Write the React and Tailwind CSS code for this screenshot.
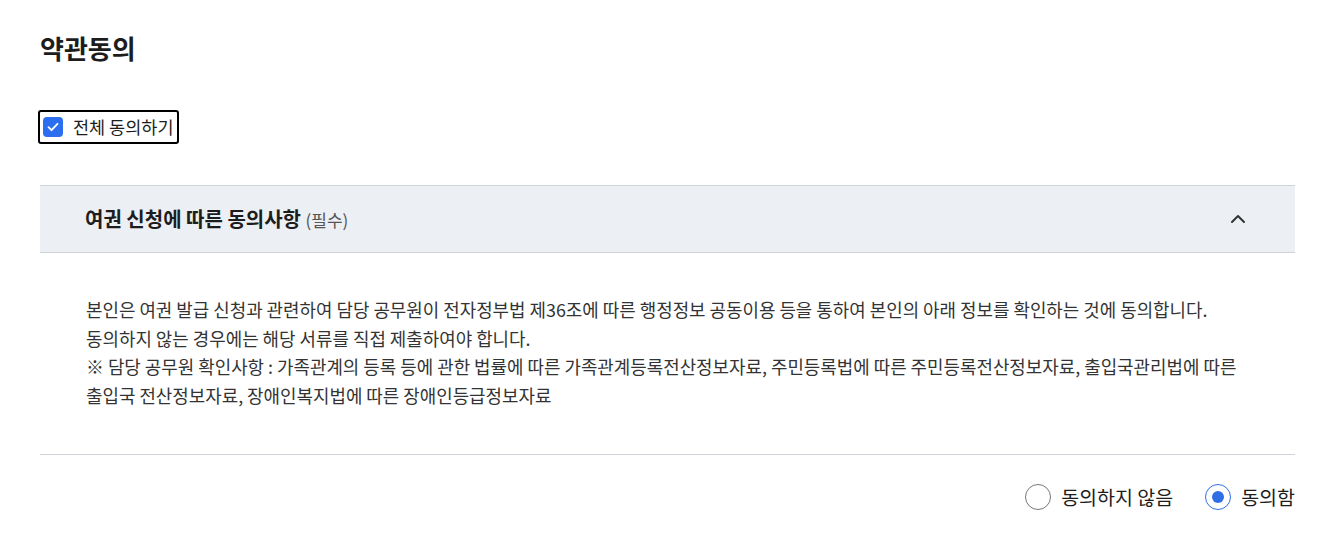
import React, { useState } from 'react';

const Chevron = ({ open }) => (
  <svg width="20" height="20" viewBox="0 0 20 20" fill="none" className={open ? '' : 'rotate-180'}>
    <path d="M4 13l6-6 6 6" stroke="#333" strokeWidth="2" strokeLinecap="round" strokeLinejoin="round" />
  </svg>
);

const Radio = ({ checked, label, onClick }) => (
  <button type="button" onClick={onClick} className="flex items-center gap-[10px]">
    <span className={`w-[26px] h-[26px] rounded-full border flex items-center justify-center bg-white ${checked ? 'border-[#2f6fe4]' : 'border-[#777]'}`}>
      {checked && <span className="w-[12px] h-[12px] rounded-full bg-[#2f6fe4]" />}
    </span>
    <span className="text-[19.5px] text-[#1d1d1d]">{label}</span>
  </button>
);

export default function App() {
  const [all, setAll] = useState(true);
  const [open, setOpen] = useState(true);
  const [agree, setAgree] = useState(true);

  return (
    <div className="bg-white min-h-[546px] pl-[40px] pr-[33px] pt-[28px] text-[#1d1d1d]" style={{ fontFamily: '"Noto Sans CJK KR", "Noto Sans", sans-serif' }}>
      <h2 className="text-[26px] font-bold leading-[40px]">약관동의</h2>

      <div className="mt-[42px]">
        <label className="inline-flex items-center gap-[10px] ml-[-2px] h-[34px] pl-[3px] pr-[3px] border-2 border-black rounded-[3px] cursor-pointer">
          <span
            onClick={() => setAll(!all)}
            className={`w-[20px] h-[20px] rounded-[4px] flex items-center justify-center ${all ? 'bg-[#2b6ff0]' : 'border border-[#777] bg-white'}`}
          >
            {all && (
              <svg width="14" height="14" viewBox="0 0 14 14" fill="none">
                <path d="M2.5 7.2l3 3 6-6.4" stroke="white" strokeWidth="1.8" strokeLinecap="round" strokeLinejoin="round" />
              </svg>
            )}
          </span>
          <span className="text-[17.5px] leading-none">전체 동의하기</span>
        </label>
      </div>

      <div className="mt-[41px]">
        <button
          type="button"
          onClick={() => setOpen(!open)}
          className="w-full h-[68px] flex items-center justify-between pl-[45px] pr-[47px] bg-[#eceff3] border-y border-[#cfd2d6] text-left"
        >
          <span className="text-[20px] font-bold">
            여권 신청에 따른 동의사항 <span className="text-[17px] font-normal text-[#555]">(필수)</span>
          </span>
          <Chevron open={open} />
        </button>

        {open && (
          <div className="pl-[46px] pr-[40px] pt-[42px] pb-[45px] border-b border-[#cfd2d6] text-[17.9px] leading-[28.5px] text-[#333]">
            <p>본인은 여권 발급 신청과 관련하여 담당 공무원이 전자정부법 제36조에 따른 행정정보 공동이용 등을 통하여 본인의 아래 정보를 확인하는 것에 동의합니다.</p>
            <p>동의하지 않는 경우에는 해당 서류를 직접 제출하여야 합니다.</p>
            <p>※ 담당 공무원 확인사항 : 가족관계의 등록 등에 관한 법률에 따른 가족관계등록전산정보자료, 주민등록법에 따른 주민등록전산정보자료, 출입국관리법에 따른 출입국 전산정보자료, 장애인복지법에 따른 장애인등급정보자료</p>
          </div>
        )}

        <div className="flex justify-end gap-[32px] pt-[27px]">
          <Radio checked={!agree} label="동의하지 않음" onClick={() => setAgree(false)} />
          <Radio checked={agree} label="동의함" onClick={() => setAgree(true)} />
        </div>
      </div>
    </div>
  );
}
